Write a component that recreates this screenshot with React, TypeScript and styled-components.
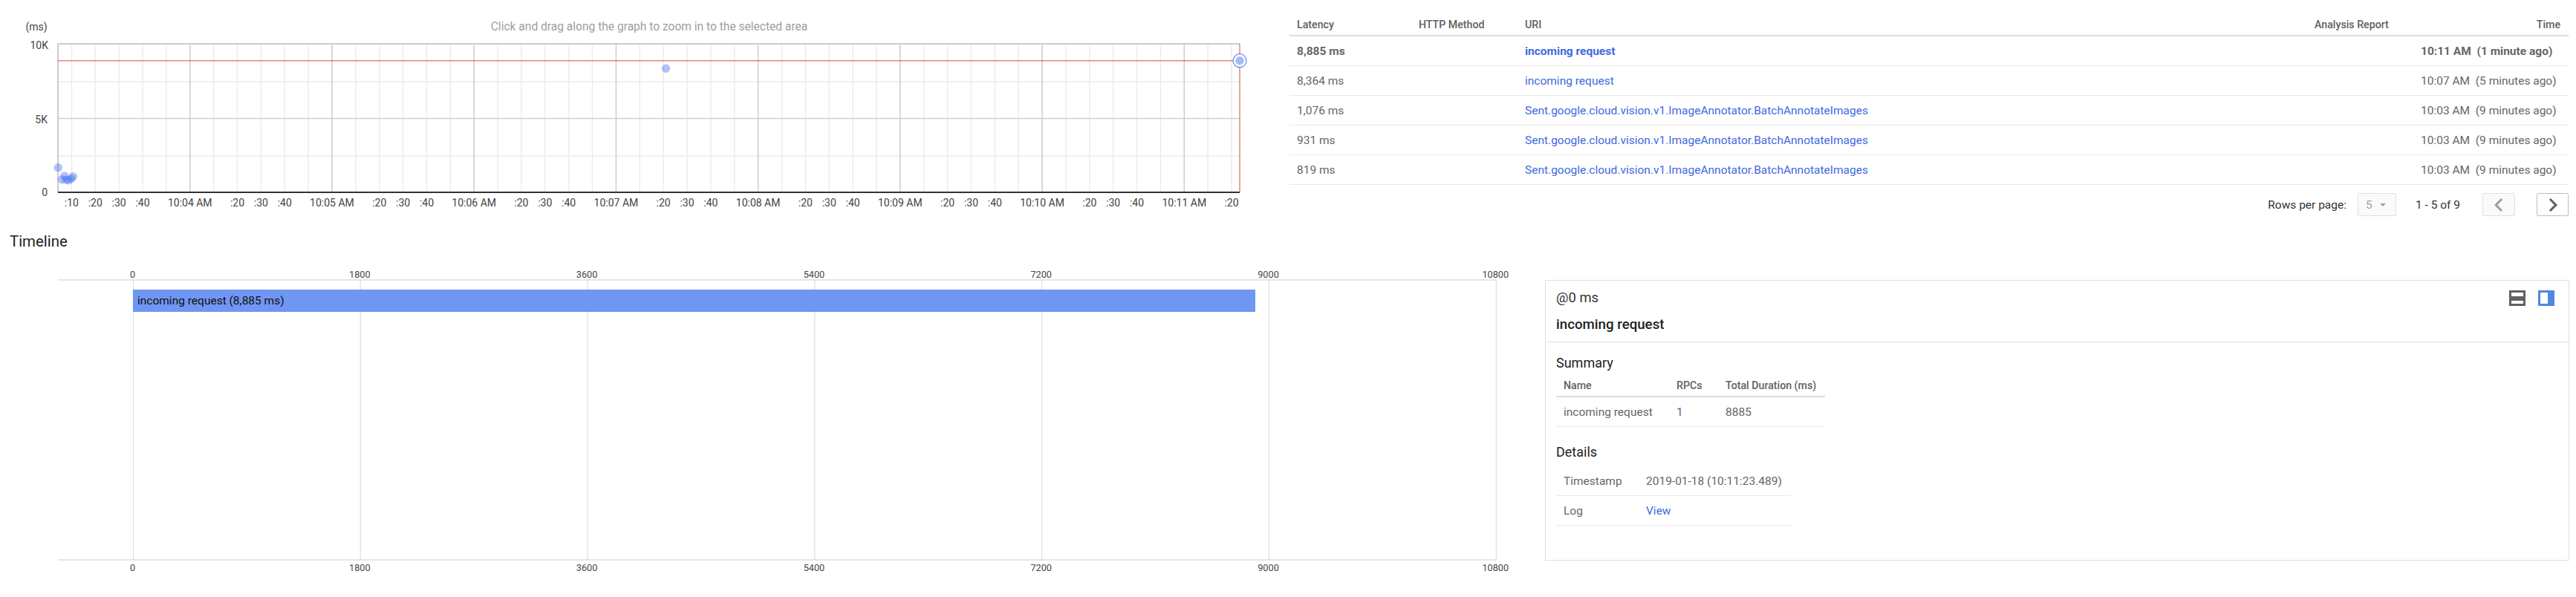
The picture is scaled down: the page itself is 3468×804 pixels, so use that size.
import React from 'react';
import styled, { createGlobalStyle } from 'styled-components';

const GlobalStyle = createGlobalStyle`
  body {
    background: #fff;
    color: #212121;
    font-family: Roboto, 'Liberation Sans', sans-serif;
    margin: 0;
  }
`;

const Page = styled.div`
  display: flex;
  flex-direction: column;
  width: 3468px;
`;

const TopRow = styled.div`
  display: flex;
  height: 310px;
`;

const ChartPane = styled.div`
  flex: 0 0 1736px;
`;

const ChartSvg = styled.svg`
  display: block;
`;

const Hint = styled.text`
  dominant-baseline: central;
  fill: #9e9e9e;
  font-size: 15.57px;
  text-anchor: middle;
`;

const AxisLabel = styled.text<{ $anchor?: string }>`
  dominant-baseline: central;
  fill: #444;
  font-size: 14px;
  text-anchor: ${props => props.$anchor || 'middle'};
`;

const TimelineLabel = styled.text`
  dominant-baseline: central;
  fill: #444;
  font-size: 12.7px;
  text-anchor: middle;
`;

const BarLabel = styled.text`
  dominant-baseline: central;
  fill: #111;
  font-size: 15.5px;
`;

const TracePane = styled.div`
  flex: 0 0 1722px;
`;

const TraceTable = styled.table`
  border-collapse: separate;
  border-spacing: 0;
  table-layout: fixed;
  width: 1722px;
`;

const HeadCell = styled.th<{ $right?: boolean }>`
  border-bottom: 2px solid #dcdcdc;
  box-sizing: border-box;
  color: #616161;
  font-size: 14.2px;
  font-weight: 500;
  height: 49px;
  padding: 25px ${props => (props.$right ? 11 : 0)}px 0 10px;
  text-align: ${props => (props.$right ? 'right' : 'left')};
  vertical-align: top;
`;

const Cell = styled.td<{ $bold?: boolean }>`
  border-bottom: 1px solid #e8e8e8;
  box-sizing: border-box;
  color: #666;
  font-size: 15.5px;
  font-weight: ${props => (props.$bold ? 700 : 400)};
  height: 40px;
  padding: 0 0 0 10px;
  white-space: pre;
`;

const Link = styled.a<{ $bold?: boolean }>`
  color: #4169e1;
  font-weight: ${props => (props.$bold ? 700 : 400)};
  text-decoration: none;
`;

const Pager = styled.div`
  align-items: center;
  color: #333;
  display: flex;
  font-size: 15.5px;
  height: 31px;
  justify-content: flex-end;
  margin-top: 11px;
`;

const PageSelect = styled.div`
  align-items: center;
  background: #fafafa;
  border: 1px solid #e0e0e0;
  border-radius: 2px;
  box-sizing: border-box;
  color: #9e9e9e;
  display: flex;
  height: 31px;
  margin: 0 26px 0 15px;
  padding-left: 10px;
  width: 52px;
`;

const SelectArrow = styled.span`
  border-left: 4.5px solid transparent;
  border-right: 4.5px solid transparent;
  border-top: 4.5px solid #9e9e9e;
  height: 0;
  margin-left: 10px;
  width: 0;
`;

const PageButton = styled.button<{ $enabled?: boolean }>`
  align-items: center;
  background: ${props => (props.$enabled ? '#fff' : '#fafafa')};
  border: 1px solid ${props => (props.$enabled ? '#bdbdbd' : '#e0e0e0')};
  border-radius: 2px;
  box-sizing: border-box;
  color: ${props => (props.$enabled ? '#616161' : '#9e9e9e')};
  display: flex;
  height: 31px;
  justify-content: center;
  margin-left: ${props => (props.$enabled ? 29 : 30)}px;
  padding: 0;
  width: ${props => (props.$enabled ? 43 : 44)}px;

  svg {
    flex-shrink: 0;
  }
`;

const Heading = styled.h2`
  color: #212121;
  font-size: 20.4px;
  font-weight: 400;
  line-height: 30px;
  margin: 0;
  padding-left: 13px;
`;

const BottomRow = styled.div`
  display: flex;
`;

const TimelinePane = styled.div`
  flex: 0 0 2080px;
`;

const Panel = styled.section`
  border: 1px solid #e0e0e0;
  box-sizing: border-box;
  height: 378px;
  margin-top: 37px;
  width: 1379px;
`;

const PanelHeader = styled.header`
  border-bottom: 1px solid #e0e0e0;
  box-sizing: border-box;
  height: 83px;
  margin-left: 1px;
  padding: 10px 19px 0 13px;
`;

const HeaderTop = styled.div`
  align-items: center;
  display: flex;
  height: 24px;
  justify-content: space-between;
`;

const Offset = styled.div`
  color: #333;
  font-size: 18.4px;
`;

const ViewIcons = styled.div`
  display: flex;
  gap: 17px;
  margin-top: 2px;
`;

const SpanTitle = styled.div`
  color: #212121;
  font-size: 18.7px;
  font-weight: 500;
  line-height: 24px;
  margin-top: 13px;
`;

const PanelBody = styled.div`
  padding: 16px 0 0 14px;
`;

const SectionTitle = styled.h3`
  color: #212121;
  font-size: 18px;
  font-weight: 400;
  line-height: 24px;
  margin: 0;
`;

const SummaryTable = styled.table`
  border-collapse: separate;
  border-spacing: 0;
  margin: 4px 0 22px;
  table-layout: fixed;
  width: 362px;
`;

const SummaryHead = styled.th`
  border-bottom: 2px solid #dcdcdc;
  box-sizing: border-box;
  color: #616161;
  font-size: 14.2px;
  font-weight: 500;
  height: 30px;
  padding: 0 0 0 10px;
  text-align: left;
`;

const DetailTable = styled.table`
  border-collapse: separate;
  border-spacing: 0;
  margin-top: 7px;
  table-layout: fixed;
  width: 316px;
`;

const DetailValue = styled.td`
  border-bottom: 1px solid #e8e8e8;
  box-sizing: border-box;
  color: #666;
  font-size: 15.5px;
  height: 40px;
  padding: 0;
  white-space: nowrap;
`;

const rows = [
  { latency: '8,885 ms', uri: 'incoming request', time: '10:11 AM  (1 minute ago)', bold: true },
  { latency: '8,364 ms', uri: 'incoming request', time: '10:07 AM  (5 minutes ago)' },
  { latency: '1,076 ms', uri: 'Sent.google.cloud.vision.v1.ImageAnnotator.BatchAnnotateImages', time: '10:03 AM  (9 minutes ago)' },
  { latency: '931 ms', uri: 'Sent.google.cloud.vision.v1.ImageAnnotator.BatchAnnotateImages', time: '10:03 AM  (9 minutes ago)' },
  { latency: '819 ms', uri: 'Sent.google.cloud.vision.v1.ImageAnnotator.BatchAnnotateImages', time: '10:03 AM  (9 minutes ago)' },
];

const points = [
  [78.3, 225.7],
  [86.7, 237],
  [83.3, 241.7],
  [89, 242],
  [92.3, 242.7],
  [96, 240.7],
  [98.3, 237.7],
  [896.5, 92.3],
];

const PLOT_LEFT = 78;
const PLOT_RIGHT = 1669;
const PLOT_TOP = 59;
const PLOT_BOTTOM = 259;

// one tick every 10 seconds from 10:03:10; the :10 and :50 ticks next to a minute have no label
const tickLabel = (i: number) => {
  const step = i % 6;
  if (step === 5) {
    return `10:${String(4 + Math.floor(i / 6)).padStart(2, '0')} AM`;
  }
  if (step === 4 || (step === 0 && i > 0)) {
    return '';
  }
  return `:${(step + 1) * 10}`;
};

const ticks = Array.from({ length: 50 }, (_, i) => ({
  x: 96.4 + i * 31.87,
  major: i % 6 === 5,
  text: tickLabel(i),
}));

const LatencyChart = () => (
  <ChartSvg width={1700} height={300} viewBox="0 0 1700 300">
    <AxisLabel x={49} y={36}>(ms)</AxisLabel>
    <Hint x={874} y={36}>Click and drag along the graph to zoom in to the selected area</Hint>
    <AxisLabel $anchor="end" x={65} y={60.5}>10K</AxisLabel>
    <AxisLabel $anchor="end" x={64} y={160.5}>5K</AxisLabel>
    <AxisLabel $anchor="end" x={64} y={259}>0</AxisLabel>

    {[110, 210].map(y => (
      <line key={y} x1={PLOT_LEFT} x2={PLOT_RIGHT} y1={y} y2={y} stroke="#f0f0f0" strokeWidth={2} />
    ))}
    {ticks.filter(t => !t.major).map(t => (
      <line key={t.x} x1={t.x} x2={t.x} y1={PLOT_TOP} y2={PLOT_BOTTOM} stroke="#ececec" strokeWidth={1.5} />
    ))}
    <line x1={PLOT_LEFT} x2={PLOT_RIGHT} y1={159.5} y2={159.5} stroke="#cfcfcf" strokeWidth={1.5} />
    {ticks.filter(t => t.major).map(t => (
      <line key={t.x} x1={t.x} x2={t.x} y1={PLOT_TOP} y2={PLOT_BOTTOM} stroke="#cccccc" strokeWidth={1.5} />
    ))}
    <line x1={PLOT_LEFT} x2={PLOT_RIGHT} y1={PLOT_TOP} y2={PLOT_TOP} stroke="#cccccc" strokeWidth={2} />
    <line x1={PLOT_LEFT} x2={PLOT_LEFT} y1={PLOT_TOP} y2={PLOT_BOTTOM} stroke="#cccccc" strokeWidth={2} />
    <line x1={PLOT_LEFT} x2={PLOT_RIGHT} y1={PLOT_BOTTOM} y2={PLOT_BOTTOM} stroke="#333" strokeWidth={2} />

    <line x1={PLOT_LEFT} x2={PLOT_RIGHT} y1={81.7} y2={81.7} stroke="#c62828" strokeOpacity={0.55} strokeWidth={1.5} />
    <line x1={PLOT_RIGHT} x2={PLOT_RIGHT} y1={PLOT_TOP} y2={PLOT_BOTTOM} stroke="#c9504a" strokeWidth={1} />

    {points.map(([cx, cy]) => (
      <circle key={cx} cx={cx} cy={cy} r={5.7} fill="#426ef0" fillOpacity={0.42} />
    ))}
    <circle cx={PLOT_RIGHT} cy={81.7} r={9} fill="#fff" stroke="#5c85ee" strokeWidth={1.2} />
    <circle cx={PLOT_RIGHT} cy={81.7} r={5.7} fill="#a6bcf5" />

    {ticks.filter(t => t.text).map(t => (
      <AxisLabel key={t.x} x={t.x} y={273}>{t.text}</AxisLabel>
    ))}
  </ChartSvg>
);

const timelineTicks = [0, 1800, 3600, 5400, 7200, 9000, 10800];
const TIMELINE_TOP = 377;
const TIMELINE_BOTTOM = 754;

const TimelineChart = () => (
  <ChartSvg width={2080} height={450} viewBox="0 340 2080 450">
    {[TIMELINE_TOP, TIMELINE_BOTTOM].map(y => (
      <line key={y} x1={78} x2={2014.5} y1={y} y2={y} stroke="#dedede" strokeWidth={1.5} />
    ))}
    {timelineTicks.map((value, i) => {
      const x = 179.5 + i * 305.8;
      return (
        <g key={value}>
          <line x1={x} x2={x} y1={TIMELINE_TOP} y2={TIMELINE_BOTTOM} stroke="#dedede" strokeWidth={1.2} />
          <TimelineLabel x={x - 1} y={369}>{value}</TimelineLabel>
          <TimelineLabel x={x - 1} y={764}>{value}</TimelineLabel>
        </g>
      );
    })}
    <rect x={179} y={390} width={1511} height={30} fill="#7096f3" />
    <BarLabel x={185} y={404.5}>incoming request (8,885 ms)</BarLabel>
  </ChartSvg>
);

const StackedIcon = () => (
  <svg width={22} height={21} viewBox="0 0 22 21">
    <path fillRule="evenodd" fill="#616161" d="M0 0h22v21H0zM3 3v5h16V3zM3 14v4h16v-4z" />
  </svg>
);

const SideBySideIcon = () => (
  <svg width={22} height={21} viewBox="0 0 22 21">
    <path fillRule="evenodd" fill="#5187e1" d="M0 0h22v21H0zM3 3v15h10V3z" />
  </svg>
);

const ChevronLeft = () => (
  <svg width={36} height={36} viewBox="0 0 24 24" fill="currentColor">
    <path d="M15.41 7.41L14 6l-6 6 6 6 1.41-1.41L10.83 12z" />
  </svg>
);

const ChevronRight = () => (
  <svg width={36} height={36} viewBox="0 0 24 24" fill="currentColor">
    <path d="M8.59 16.59L10 18l6-6-6-6-1.41 1.41L13.17 12z" />
  </svg>
);

export default function App() {
  return (
    <Page>
      <GlobalStyle />
      <TopRow>
        <ChartPane>
          <LatencyChart />
        </ChartPane>
        <TracePane>
          <TraceTable>
            <colgroup>
              <col width={164} />
              <col width={143} />
              <col width={1063} />
              <col width={143} />
              <col width={209} />
            </colgroup>
            <thead>
              <tr>
                <HeadCell>Latency</HeadCell>
                <HeadCell>HTTP Method</HeadCell>
                <HeadCell>URI</HeadCell>
                <HeadCell>Analysis Report</HeadCell>
                <HeadCell $right>Time</HeadCell>
              </tr>
            </thead>
            <tbody>
              {rows.map(row => (
                <tr key={row.time + row.latency}>
                  <Cell $bold={row.bold}>{row.latency}</Cell>
                  <Cell />
                  <Cell>
                    <Link $bold={row.bold} href="#">{row.uri}</Link>
                  </Cell>
                  <Cell />
                  <Cell $bold={row.bold}>{row.time}</Cell>
                </tr>
              ))}
            </tbody>
          </TraceTable>
          <Pager>
            Rows per page:
            <PageSelect>
              5
              <SelectArrow />
            </PageSelect>
            1 - 5 of 9
            <PageButton>
              <ChevronLeft />
            </PageButton>
            <PageButton $enabled>
              <ChevronRight />
            </PageButton>
          </Pager>
        </TracePane>
      </TopRow>
      <Heading>Timeline</Heading>
      <BottomRow>
        <TimelinePane>
          <TimelineChart />
        </TimelinePane>
        <Panel>
          <PanelHeader>
            <HeaderTop>
              <Offset>@0 ms</Offset>
              <ViewIcons>
                <StackedIcon />
                <SideBySideIcon />
              </ViewIcons>
            </HeaderTop>
            <SpanTitle>incoming request</SpanTitle>
          </PanelHeader>
          <PanelBody>
            <SectionTitle>Summary</SectionTitle>
            <SummaryTable>
              <colgroup>
                <col width={152} />
                <col width={66} />
                <col width={144} />
              </colgroup>
              <thead>
                <tr>
                  <SummaryHead>Name</SummaryHead>
                  <SummaryHead>RPCs</SummaryHead>
                  <SummaryHead>Total Duration (ms)</SummaryHead>
                </tr>
              </thead>
              <tbody>
                <tr>
                  <Cell>incoming request</Cell>
                  <Cell>1</Cell>
                  <Cell>8885</Cell>
                </tr>
              </tbody>
            </SummaryTable>
            <SectionTitle>Details</SectionTitle>
            <DetailTable>
              <colgroup>
                <col width={121} />
                <col width={195} />
              </colgroup>
              <tbody>
                <tr>
                  <Cell>Timestamp</Cell>
                  <DetailValue>2019-01-18 (10:11:23.489)</DetailValue>
                </tr>
                <tr>
                  <Cell>Log</Cell>
                  <DetailValue>
                    <Link href="#">View</Link>
                  </DetailValue>
                </tr>
              </tbody>
            </DetailTable>
          </PanelBody>
        </Panel>
      </BottomRow>
    </Page>
  );
}
